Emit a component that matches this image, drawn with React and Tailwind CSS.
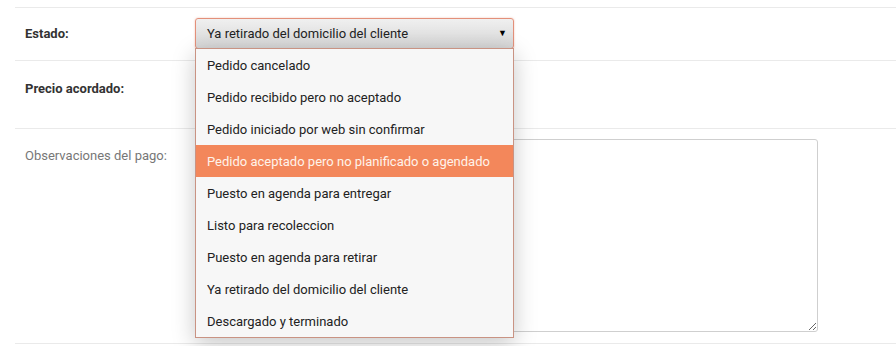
import React from "react";

const opciones = [
  "Pedido cancelado",
  "Pedido recibido pero no aceptado",
  "Pedido iniciado por web sin confirmar",
  "Pedido aceptado pero no planificado o agendado",
  "Puesto en agenda para entregar",
  "Listo para recoleccion",
  "Puesto en agenda para retirar",
  "Ya retirado del domicilio del cliente",
  "Descargado y terminado",
];

const activo = 3;

const App = () => {
  return (
    <div className="min-h-screen bg-white pt-[7px] pl-[15px] text-[13px] text-[#222]" style={{ fontFamily: "Roboto, 'Liberation Sans', sans-serif" }}>
      {/* Estado */}
      <div className="flex border-t border-[#eaeaea] pt-[10px] pb-[11px]">
        <div className="w-[180px] pl-[10px] flex items-center h-[31px] font-bold text-[13px] text-[#333]">Estado:</div>
        <div className="relative">
          <div className="w-[319px] h-[31px] flex items-center justify-between pl-[11px] pr-[6px] pt-[1px] rounded-[3px] border border-[#e3907a] bg-gradient-to-b from-[#f0f0f0] to-[#d6d6d6] shadow-[0_0_2px_rgba(230,130,100,0.5)]">
            <span>Ya retirado del domicilio del cliente</span>
            <span className="text-[9px] text-black">▼</span>
          </div>

          {/* Lista desplegada */}
          <div className="absolute left-0 top-[30px] z-10 w-[319px] bg-[#f7f7f7] border border-[#c99383] shadow-[0_6px_22px_rgba(0,0,0,0.22)]">
            {opciones.map((op, i) => (
              <div
                key={op}
                className={`h-[32px] flex items-center pl-[11px] pt-[2px] ${i === activo ? "bg-[#f3875b] text-[#fff3ea]" : ""}`}
              >
                {op}
              </div>
            ))}
          </div>
        </div>
      </div>

      {/* Precio */}
      <div className="flex border-t border-[#eaeaea] h-[68px] pt-[18px]">
        <div className="w-[180px] pl-[10px] font-bold text-[13px] text-[#333]">Precio acordado:</div>
      </div>

      {/* Observaciones */}
      <div className="flex border-t border-[#eaeaea] pt-[10px] pb-[11px] border-b">
        <div className="w-[180px] pl-[10px] pt-[7px] text-[#777]">Observaciones del pago:</div>
        <textarea className="w-[623px] h-[193px] rounded-[3px] border border-[#cfcfcf] bg-white resize" />
      </div>
    </div>
  );
};

export default App;
